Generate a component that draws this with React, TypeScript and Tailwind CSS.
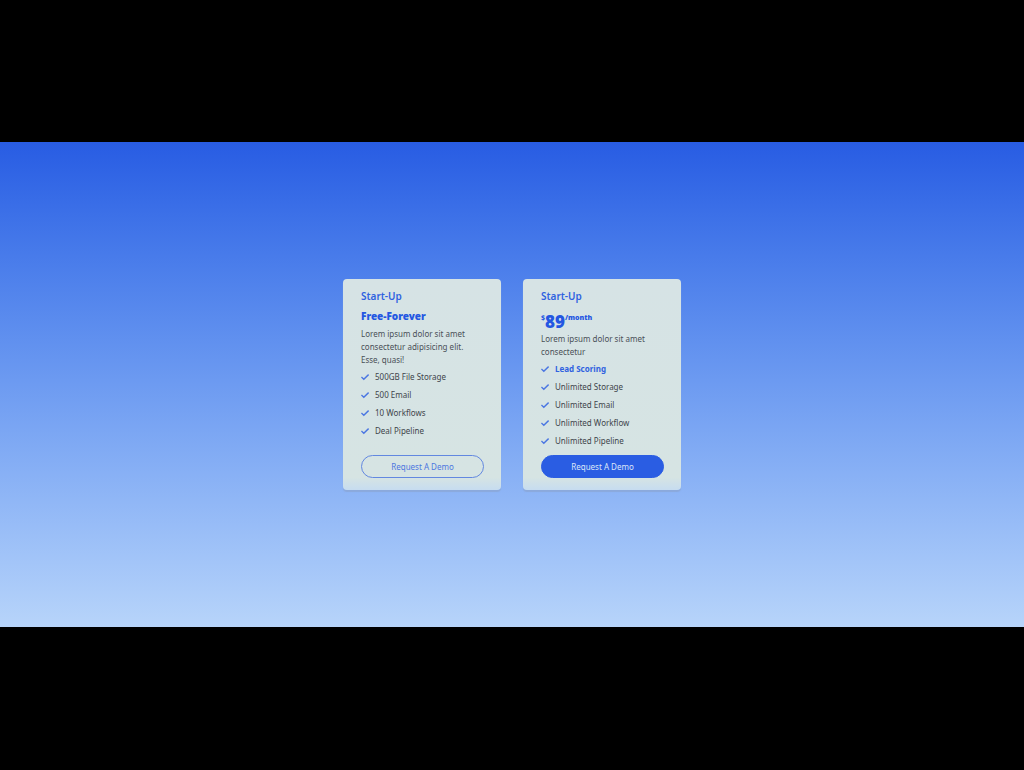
import type { ReactNode } from "react";

function Check() {
  return (
    <svg viewBox="0 0 8 8" className="size-2 shrink-0 text-[#4a76e2]" fill="none" stroke="currentColor" strokeWidth="1.4" aria-hidden="true">
      <path d="M0.4 4 2.8 6.3 7.6 1.6" />
    </svg>
  );
}

type CardProps = {
  price: ReactNode;
  text: string;
  features: string[];
  highlighted?: string;
  filled?: boolean;
};

function Card({ price, text, features, highlighted, filled }: CardProps) {
  return (
    <article className="flex w-[158px] flex-col rounded bg-linear-to-b from-[#d6e3e5] from-0% via-[#d6e4e3] via-94% to-[#c6dcf0] pt-2.5 pr-[17px] pb-3 pl-[18px] shadow-[0_2px_1px_#8ba9dc]">
      <h2 className="text-[10px] leading-[14px] font-semibold text-[#2f62e0]">Start-Up</h2>
      {price}
      <p className="pr-2 text-[8px] leading-[13px] text-[#4a5057]">{text}</p>
      <ul className="mt-0.5 mb-[5px] text-[8px] text-[#3e444b]">
        {features.map((feature) => (
          <li key={feature} className="flex h-[18px] items-center gap-1.5">
            <Check />
            <span className={feature === highlighted ? "font-bold text-[#2f62e0]" : ""}>{feature}</span>
          </li>
        ))}
      </ul>
      <button
        type="button"
        className={
          filled
            ? "mt-auto h-[23px] rounded-full border border-[#2a5de3] bg-[#2a5de3] text-[8px] text-[#dce7f8]"
            : "mt-auto h-[23px] rounded-full border border-[#6288e0] text-[8px] text-[#4c77e0]"
        }
      >
        Request A Demo
      </button>
    </article>
  );
}

export default function App() {
  return (
    <div className="flex min-h-screen flex-col bg-black pt-[142px] pb-[143px] font-['Noto_Sans','Open_Sans',sans-serif]">
      <main className="flex flex-1 items-center justify-center bg-linear-to-b from-[#285ce3] to-[#b7d4fa]">
        <div className="flex items-stretch gap-[22px]">
          <Card
            price={<h3 className="mt-1.5 mb-1 text-[10px] leading-[14px] font-black text-[#2457e2]">Free-Forever</h3>}
            text="Lorem ipsum dolor sit amet consectetur adipisicing elit. Esse, quasi!"
            features={["500GB File Storage", "500 Email", "10 Workflows", "Deal Pipeline"]}
          />
          <Card
            price={
              <h3 className="mt-2.5 flex h-[19px] items-start font-black text-[#2457e2]">
                <span className="text-[7px] leading-[9px] font-bold">$</span>
                <span className="text-[17px] leading-[18px]">89</span>
                <span className="text-[7px] leading-[9px]">/month</span>
              </h3>
            }
            text="Lorem ipsum dolor sit amet consectetur"
            features={["Lead Scoring", "Unlimited Storage", "Unlimited Email", "Unlimited Workflow", "Unlimited Pipeline"]}
            highlighted="Lead Scoring"
            filled
          />
        </div>
      </main>
    </div>
  );
}
